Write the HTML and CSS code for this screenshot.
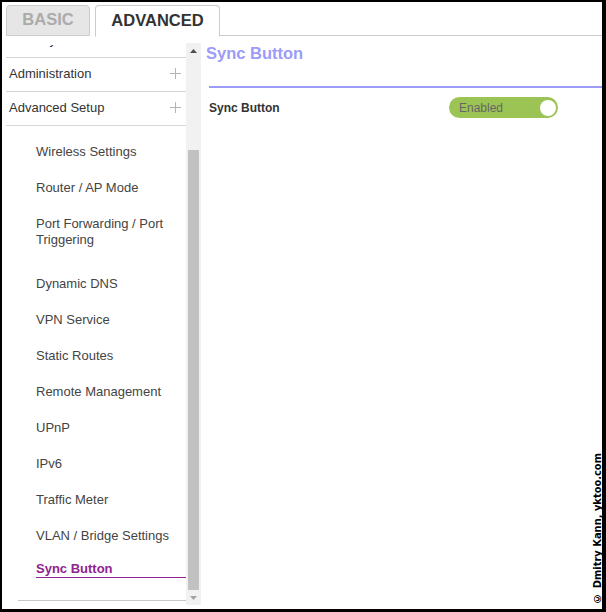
FILE: index.html
```html
<!DOCTYPE html>
<html>
<head>
<meta charset="utf-8">
<link rel="stylesheet" href="styles.css">
</head>
<body>
<div class="frame">
  <div class="tabs">
    <div class="tab tab-basic">BASIC</div>
    <div class="tab tab-adv">ADVANCED</div>
    <div class="tab-fill"></div>
  </div>
  <div class="main">
    <div class="sidebar">
      <div class="scroll">
        <div class="menu">
          <div class="menu-item"><span>Security</span><svg class="plus" width="11" height="11" viewBox="0 0 11 11"><path d="M5.5 0V11M0 5.5H11" stroke="#b5b5b5" stroke-width="1"/></svg></div>
          <div class="menu-item"><span>Administration</span><svg class="plus" width="11" height="11" viewBox="0 0 11 11"><path d="M5.5 0V11M0 5.5H11" stroke="#b5b5b5" stroke-width="1"/></svg></div>
          <div class="menu-item"><span>Advanced Setup</span><svg class="plus" width="11" height="11" viewBox="0 0 11 11"><path d="M5.5 0V11M0 5.5H11" stroke="#b5b5b5" stroke-width="1"/></svg></div>
          <div class="submenu">
            <div class="sub">Wireless Settings</div>
            <div class="sub">Router / AP Mode</div>
            <div class="sub sub-two">Port Forwarding / Port Triggering</div>
            <div class="sub">Dynamic DNS</div>
            <div class="sub">VPN Service</div>
            <div class="sub">Static Routes</div>
            <div class="sub">Remote Management</div>
            <div class="sub">UPnP</div>
            <div class="sub">IPv6</div>
            <div class="sub">Traffic Meter</div>
            <div class="sub">VLAN / Bridge Settings</div>
            <div class="sub sub-active">Sync Button</div>
          </div>
          <div class="menu-foot"></div>
        </div>
      </div>
      <div class="scrollbar">
        <div class="sb-btn"><svg width="7" height="4" viewBox="0 0 7 4"><path d="M0 4L3.5 0L7 4Z" fill="#505050"/></svg></div>
        <div class="sb-track"><div class="sb-thumb"></div></div>
        <div class="sb-btn"><svg width="7" height="4" viewBox="0 0 7 4"><path d="M0 0L3.5 4L7 0Z" fill="#a3a3a3"/></svg></div>
      </div>
    </div>
    <div class="content">
      <h1 class="title">Sync Button</h1>
      <div class="section">
        <div class="row">
          <span class="label">Sync Button</span>
          <div class="toggle"><span class="toggle-text">Enabled</span><span class="knob"></span></div>
        </div>
      </div>
    </div>
  </div>
  <div class="watermark">© Dmitry Kann, yktoo.com</div>
</div>
</body>
</html>
```
FILE: styles.css
```css
html, body {
  margin: 0;
  padding: 0;
  background: #000;
}
body {
  width: 606px;
  height: 612px;
  overflow: hidden;
  font-family: "Liberation Sans", Arial, sans-serif;
}
.frame {
  position: relative;
  margin: 2px 4px 0 2px;
  width: 600px;
  height: 607px;
  background: #fff;
}
.tabs {
  box-sizing: border-box;
  display: flex;
  align-items: flex-end;
  height: 34px;
  padding-left: 4px;
}
.tab {
  box-sizing: border-box;
  font-size: 16.5px;
  font-weight: bold;
  display: flex;
  align-items: center;
  justify-content: center;
  border: 1px solid #cccccc;
  border-radius: 4px 4px 0 0;
}
.tab-basic {
  width: 84px;
  height: 31px;
  background: #e6e6e6;
  color: #ababab;
  padding-bottom: 2px;
}
.tab-adv {
  width: 125px;
  height: 32px;
  margin-left: 5px;
  background: #fff;
  color: #333;
  border-bottom: 1px solid #fff;
  margin-bottom: -1px;
  padding-bottom: 2px;
  position: relative;
  z-index: 1;
}
.tab-fill {
  flex: 1;
  border-bottom: 1px solid #cccccc;
}
.main {
  display: flex;
  align-items: flex-start;
}
.sidebar {
  display: flex;
  align-items: flex-start;
  margin: 7px 0 0 4px;
  height: 562px;
}
.scroll {
  width: 180px;
  height: 560px;
  margin-top: 2px;
  overflow: hidden;
}
.menu {
  margin-top: -21px;
}
.menu-item {
  box-sizing: border-box;
  height: 34px;
  border-bottom: 1px solid #d6d6d6;
  display: flex;
  align-items: center;
  justify-content: space-between;
  padding: 0 5px 3px 3px;
  font-size: 13px;
  color: #333;
}
.plus {
  display: block;
}
.submenu {
  padding-top: 8px;
}
.sub {
  margin-left: 30px;
  padding: 10px 0;
  line-height: 16px;
  font-size: 13px;
  color: #444;
}
.sub-two {
  padding-bottom: 18px;
  padding-right: 10px;
}
.sub-active {
  padding: 7px 0 0;
  font-weight: bold;
  color: #8f238f;
  border-bottom: 1px solid #8f238f;
}
.menu-foot {
  margin: 22px 0 0 12px;
  border-top: 1px solid #c8c8c8;
}
.scrollbar {
  width: 15px;
  height: 562px;
  background: #f1f1f1;
  display: flex;
  flex-direction: column;
}
.sb-btn {
  height: 15px;
  display: flex;
  align-items: center;
  justify-content: center;
}
.sb-track {
  flex: 1;
  display: flex;
  flex-direction: column;
  justify-content: flex-end;
}
.sb-thumb {
  margin: 0 2px;
  height: 440px;
  background: #c1c1c1;
}
.content {
  flex: 1;
  margin-left: 5px;
  padding-top: 7px;
}
.title {
  margin: 0;
  font-size: 16.5px;
  line-height: 20px;
  font-weight: bold;
  color: #9c9cf8;
}
.section {
  margin: 23px 0 0 3px;
  border-top: 2px solid #9c9cf8;
}
.row {
  display: flex;
  align-items: center;
  padding-top: 9px;
}
.label {
  width: 240px;
  font-size: 12px;
  font-weight: bold;
  color: #333;
}
.toggle {
  box-sizing: border-box;
  width: 109px;
  height: 21px;
  border-radius: 11px;
  background: #9bc454;
  display: flex;
  align-items: center;
  justify-content: space-between;
  padding: 0 2px 0 10px;
}
.toggle-text {
  font-size: 12px;
  color: #666;
}
.knob {
  width: 16px;
  height: 16px;
  border-radius: 50%;
  background: #fff;
}
.watermark {
  position: absolute;
  right: -3px;
  bottom: 4px;
  writing-mode: vertical-rl;
  transform: rotate(180deg);
  font-family: "DejaVu Sans Condensed", "DejaVu Sans", sans-serif;
  font-stretch: condensed;
  font-weight: bold;
  font-size: 11px;
  line-height: 14px;
  color: #000;
}
```
